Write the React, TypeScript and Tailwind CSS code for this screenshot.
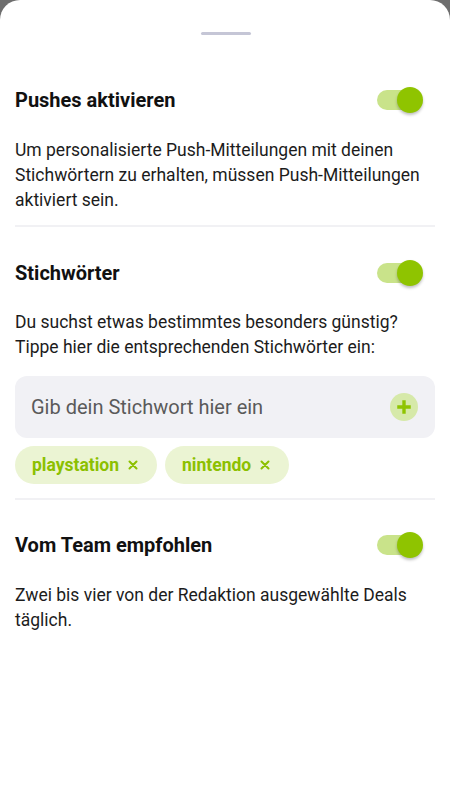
const Toggle = () => (
  <div className="relative w-[46px] h-[28px] shrink-0 mr-[14px]">
    <div className="absolute left-0 top-[4px] w-[36px] h-[20px] rounded-full bg-[#c9e38a]" />
    <div className="absolute right-0 top-[1px] w-[26px] h-[26px] rounded-full bg-[#8fc400] shadow-[0_2px_3px_rgba(0,0,0,0.25)]" />
  </div>
);

const Chip = ({ label }: { label: string }) => (
  <div className="flex items-center gap-[7px] h-[38px] px-[17px] rounded-full bg-[#ebf4d3] text-[#8cc000] text-[17.5px] font-bold">
    <span>{label}</span>
    <svg viewBox="0 0 24 24" className="w-[14px] h-[14px]" fill="none" stroke="currentColor" strokeWidth={3.5} strokeLinecap="round">
      <path d="M6 6l12 12M18 6L6 18" />
    </svg>
  </div>
);

const Title = ({ children }: { children: string }) => (
  <div className="flex items-center justify-between h-[28px]">
    <span className="text-[20px] font-bold text-[#111]">{children}</span>
    <Toggle />
  </div>
);

export default function App() {
  return (
    <div className="min-h-[800px] bg-[#6e6e6e]" style={{ fontFamily: "Roboto, 'Noto Sans', sans-serif" }}>
      <div className="min-h-[800px] bg-white rounded-t-[20px] px-[15px] pr-[13px]">
        <div className="pt-[32px] flex justify-center">
          <div className="w-[50px] h-[3px] rounded-full bg-[#c5c6d6]" />
        </div>

        <div className="mt-[51px]">
          <Title>Pushes aktivieren</Title>
          <p className="mt-[24px] text-[17.5px] leading-[25px] text-[#1c1c1c]">
            Um personalisierte Push-Mitteilungen mit deinen Stichwörtern zu erhalten, müssen Push-Mitteilungen aktiviert sein.
          </p>
        </div>
        <div className="mt-[12px] h-[2px] bg-[#f1f1f4] mr-[2px]" />

        <div className="mt-[32px]">
          <Title>Stichwörter</Title>
          <p className="mt-[23px] text-[17.5px] leading-[25px] text-[#1c1c1c]">
            Du suchst etwas bestimmtes besonders günstig? Tippe hier die entsprechenden Stichwörter ein:
          </p>
          <div className="mt-[16px] mr-[2px] h-[62px] rounded-[12px] bg-[#f1f1f5] flex items-center justify-between pl-[16px] pr-[17px]">
            <span className="text-[20px] text-[#5a5a5a]">Gib dein Stichwort hier ein</span>
            <div className="w-[28px] h-[28px] rounded-full bg-[#d6e9a9] flex items-center justify-center">
              <svg viewBox="0 0 24 24" className="w-[18px] h-[18px]" fill="none" stroke="#8fc400" strokeWidth={4.5}>
                <path d="M12 3v18M3 12h18" />
              </svg>
            </div>
          </div>
          <div className="mt-[8px] flex gap-[8px]">
            <Chip label="playstation" />
            <Chip label="nintendo" />
          </div>
        </div>
        <div className="mt-[14px] h-[2px] bg-[#f1f1f4] mr-[2px]" />

        <div className="mt-[31px]">
          <Title>Vom Team empfohlen</Title>
          <p className="mt-[24px] text-[17.5px] leading-[25px] text-[#1c1c1c]">
            Zwei bis vier von der Redaktion ausgewählte Deals täglich.
          </p>
        </div>
      </div>
    </div>
  );
}
